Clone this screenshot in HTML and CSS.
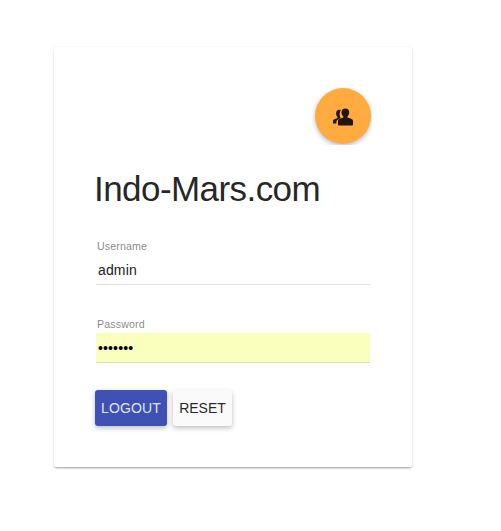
FILE: index.html
```html
<!DOCTYPE html>
<html lang="en">
<head>
<meta charset="utf-8">
<title>Indo-Mars.com</title>
<link rel="stylesheet" href="styles.css">
</head>
<body>
<main class="card">
  <div class="card-top">
    <div class="avatar">
      <svg class="avatar-icon" viewBox="0 0 20 18" aria-hidden="true">
        <path d="M7.9 2C5.2 1.1 3.1 2.6 3.1 5.2C3.1 7 3.7 8.2 4.5 9V9.9L1.3 11.2C.3 11.7 0 12.2 0 13.1V15.4H3.4V14C3.6 12.5 4.2 11.8 5.5 11.2L7.6 10.1C6.8 8.7 6.5 7.2 6.7 5.3C6.8 3.9 7.2 2.8 7.9 2Z"/>
        <path d="M12.3.5C9.9.5 8.5 2.1 8.5 4.3C8.5 6.3 9.3 7.8 10.3 8.6V9.4L6.8 10.8C5.5 11.3 5 12 5 13.2V16.6C5 17.2 5.3 17.5 5.9 17.5H19.1C19.7 17.5 20 17.2 20 16.6V13.2C20 12 19.5 11.3 18.2 10.8L14.4 9.4V8.6C15.4 7.8 16.2 6.3 16.2 4.3C16.2 2.1 14.8.5 12.3.5Z"/>
      </svg>
    </div>
  </div>
  <h1 class="title">Indo-Mars.com</h1>
  <form class="form">
    <div class="field">
      <label class="label" for="user">Username</label>
      <input class="input" id="user" type="text" value="admin">
    </div>
    <div class="field">
      <label class="label" for="pass">Password</label>
      <input class="input input-filled" id="pass" type="password" value="1234567">
    </div>
    <div class="actions">
      <button class="button button-primary" type="button">LOGOUT</button>
      <button class="button button-reset" type="button">RESET</button>
    </div>
  </form>
</main>
</body>
</html>
```
FILE: styles.css
```css
* { box-sizing: border-box; }

body {
  min-height: 100vh;
  margin: 0;
  padding: 47px 0 0 54px;
  background: #fff;
  color: rgba(0, 0, 0, .87);
  font-family: "Liberation Sans", Arial, sans-serif;
  letter-spacing: .01em;
}

.card {
  width: 358px;
  height: 420px;
  padding: 41px 40px 0;
  background: #fff;
  border-radius: 2px;
  box-shadow: 0 1px 3px rgba(0, 0, 0, .16), 0 2px 2px -1px rgba(0, 0, 0, .26);
}

.card-top {
  display: flex;
  justify-content: flex-end;
  height: 57px;
  margin: 0 0 0 -10px;
  padding-right: 1px;
  overflow: hidden;
}

.avatar {
  display: flex;
  align-items: center;
  justify-content: center;
  width: 56px;
  height: 56px;
  border-radius: 50%;
  background: #ffab40;
  box-shadow: 0 2px 5px rgba(0, 0, 0, .26);
}

.avatar-icon {
  width: 20px;
  height: 18px;
  margin-top: 2px;
  fill: rgba(0, 0, 0, .87);
}

.title {
  margin: 24px 0 0;
  font-size: 35px;
  font-weight: 400;
  line-height: 40px;
  letter-spacing: -.56px;
}

.form { padding: 30px 1px 0 2px; }

.field { height: 78px; }

.label {
  display: block;
  height: 16px;
  padding-left: 1px;
  color: rgba(0, 0, 0, .5);
  font-size: 10.6px;
  line-height: 14px;
}

.input {
  display: block;
  width: 274px;
  height: 30px;
  padding: 2px 2px 1px;
  border: 0;
  border-bottom: 1px solid rgba(0, 0, 0, .12);
  border-radius: 0;
  outline: 0;
  background: #fff;
  color: #212121;
  font: 14px "Liberation Sans", Arial, sans-serif;
  letter-spacing: .01em;
}

.input-filled {
  background: #faffbd;
  color: #000;
}

.actions {
  display: flex;
  gap: 6px;
  margin: -5px 0 0 -1px;
}

.button {
  height: 36px;
  padding: 0 6px;
  border: 0;
  border-radius: 3px;
  background: #fafafa;
  color: rgba(0, 0, 0, .87);
  font: 14px "Liberation Sans", Arial, sans-serif;
  letter-spacing: .01em;
  box-shadow: 0 2px 5px rgba(0, 0, 0, .26);
}

.button-primary {
  background: #3f51b5;
  color: rgba(255, 255, 255, .87);
}

.button-reset {
  width: 59px;
  letter-spacing: 0;
}
```
